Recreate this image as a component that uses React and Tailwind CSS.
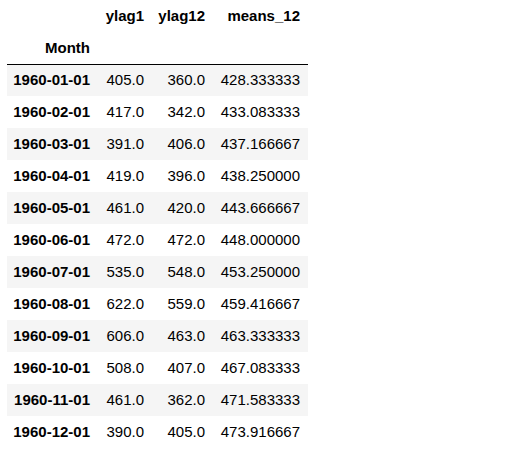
const rows = [
  ["1960-01-01", "405.0", "360.0", "428.333333"],
  ["1960-02-01", "417.0", "342.0", "433.083333"],
  ["1960-03-01", "391.0", "406.0", "437.166667"],
  ["1960-04-01", "419.0", "396.0", "438.250000"],
  ["1960-05-01", "461.0", "420.0", "443.666667"],
  ["1960-06-01", "472.0", "472.0", "448.000000"],
  ["1960-07-01", "535.0", "548.0", "453.250000"],
  ["1960-08-01", "622.0", "559.0", "459.416667"],
  ["1960-09-01", "606.0", "463.0", "463.333333"],
  ["1960-10-01", "508.0", "407.0", "467.083333"],
  ["1960-11-01", "461.0", "362.0", "471.583333"],
  ["1960-12-01", "390.0", "405.0", "473.916667"],
];

export default function App() {
  return (
    <div className="w-[525px] h-[456px] bg-white pl-[7px] font-['Liberation_Sans',Arial,sans-serif] text-[15px] text-black">
      <table className="border-collapse table-fixed w-[301px]">
        <colgroup>
          <col className="w-[91px]" />
          <col className="w-[53px]" />
          <col className="w-[61px]" />
          <col className="w-[96px]" />
        </colgroup>
        <thead>
          <tr className="h-[32px]">
            <th className="p-0"></th>
            <th className="p-0 pr-[7px] text-right font-bold">ylag1</th>
            <th className="p-0 pr-[7px] text-right font-bold">ylag12</th>
            <th className="p-0 pr-[8px] text-right font-bold">means_12</th>
          </tr>
          <tr className="h-[32px] border-b border-black">
            <th className="p-0 pr-[8px] text-right font-bold">Month</th>
            <th className="p-0"></th>
            <th className="p-0"></th>
            <th className="p-0"></th>
          </tr>
        </thead>
        <tbody>
          {rows.map((r, i) => (
            <tr key={r[0]} className={`h-[32px] ${i % 2 === 0 ? "bg-[#f5f5f5]" : "bg-white"}`}>
              <th className="p-0 pr-[8px] text-right font-bold">{r[0]}</th>
              <td className="p-0 pr-[7px] text-right">{r[1]}</td>
              <td className="p-0 pr-[7px] text-right">{r[2]}</td>
              <td className="p-0 pr-[8px] text-right">{r[3]}</td>
            </tr>
          ))}
        </tbody>
      </table>
    </div>
  );
}
